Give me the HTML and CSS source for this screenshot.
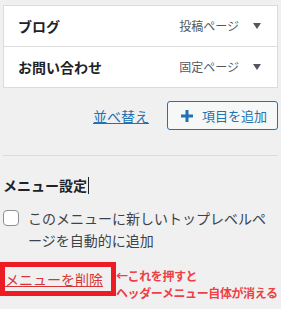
FILE: index.html
```html
<!DOCTYPE html>
<html lang="ja">
<head>
    <meta charset="UTF-8">
    <meta name="viewport" content="width=device-width, initial-scale=1.0">
    <title>メニュー設定</title>
    <link rel="stylesheet" href="styles.css">
</head>
<body>
    <div class="page">
        <!-- Menu items -->
        <ul class="menu-items">
            <li class="menu-item">
                <span class="item-title">ブログ</span>
                <span class="item-type">投稿ページ</span>
                <span class="item-arrow"></span>
            </li>
            <li class="menu-item">
                <span class="item-title">お問い合わせ</span>
                <span class="item-type">固定ページ</span>
                <span class="item-arrow"></span>
            </li>
        </ul>

        <div class="menu-actions">
            <a href="#" class="reorder-link">並べ替え</a>
            <button class="add-button">
                <svg class="plus-icon" width="12" height="12" viewBox="0 0 12 12">
                    <rect x="4.5" y="0" width="3" height="12" fill="#2271b1"></rect>
                    <rect x="0" y="4.5" width="12" height="3" fill="#2271b1"></rect>
                </svg>
                項目を追加
            </button>
        </div>

        <hr class="divider">

        <!-- Menu settings -->
        <h3 class="settings-title">メニュー設定<span class="caret"></span></h3>

        <label class="auto-add">
            <span class="checkbox"></span>
            <span class="auto-add-text">このメニューに新しいトップレベルページを自動的に追加</span>
        </label>

        <div class="delete-row">
            <div class="delete-box">
                <a href="#" class="delete-link">メニューを削除</a>
            </div>
            <div class="note">
                <span>←これを押すと</span>
                <span>ヘッダーメニュー自体が消える</span>
            </div>
        </div>
    </div>
</body>
</html>
```

FILE: styles.css
```css
/* Basic Reset */
* {
    margin: 0;
    padding: 0;
    box-sizing: border-box;
}

body {
    font-family: "Noto Sans CJK JP", "Noto Sans", sans-serif;
    background-color: #f0f0f1;
    color: #1d2327;
    font-size: 14px;
}

.page {
    padding: 5px 3px 0 3px;
}

/* Menu items */
.menu-items {
    list-style: none;
    background: #ffffff;
    border: 1px solid #dcdcde;
}

.menu-item {
    display: flex;
    align-items: center;
    height: 41px;
    padding: 0 16px 0 14px;
    border-bottom: 1px solid #dcdcde;
}

.menu-item:last-child {
    height: 40px;
    border-bottom: none;
}

.item-title {
    flex-grow: 1;
    font-size: 14px;
    font-weight: 600;
    line-height: 20px;
}

.item-type {
    font-size: 12px;
    color: #50575e;
    line-height: 20px;
}

.item-arrow {
    width: 0;
    height: 0;
    margin-left: 14px;
    border-left: 4px solid transparent;
    border-right: 4px solid transparent;
    border-top: 6px solid #50575e;
}

/* Actions */
.menu-actions {
    display: flex;
    justify-content: flex-end;
    align-items: center;
    margin-top: 13px;
}

.reorder-link {
    color: #2271b1;
    font-size: 14px;
    line-height: 20px;
    margin-right: 18px;
}

.add-button {
    display: flex;
    align-items: center;
    height: 29px;
    padding: 0 10px 0 13px;
    background: #f6f7f7;
    border: 1px solid #2271b1;
    border-radius: 3px;
    color: #2271b1;
    font-family: inherit;
    font-size: 13px;
}

.plus-icon {
    margin-right: 9px;
}

.divider {
    border: none;
    border-top: 1px solid #dcdcde;
    margin-top: 25px;
}

/* Menu settings */
.settings-title {
    display: flex;
    align-items: center;
    margin-top: 19px;
    font-size: 14px;
    font-weight: 600;
    line-height: 20px;
}

.caret {
    display: inline-block;
    width: 1px;
    height: 17px;
    background: #1d2327;
    margin-left: 1px;
}

.auto-add {
    display: flex;
    align-items: flex-start;
    margin-top: 12px;
}

.checkbox {
    flex-shrink: 0;
    width: 16px;
    height: 16px;
    margin-top: 3px;
    border: 1px solid #8c8f94;
    border-radius: 4px;
    background: #ffffff;
}

.auto-add-text {
    margin-left: 9px;
    line-height: 22px;
    color: #3c434a;
}

/* Delete */
.delete-row {
    display: flex;
    align-items: flex-start;
    margin: 11px 0 0 -3px;
}

.delete-box {
    flex-shrink: 0;
    border: 5px solid #ed1c24;
    padding: 1px 8px 1px 0;
    height: 34px;
    white-space: nowrap;
}

.delete-link {
    color: #d63638;
    font-size: 14px;
    line-height: 22px;
}

.note {
    display: flex;
    flex-direction: column;
    margin: 5px 0 0 0;
    color: #ee3f45;
    font-size: 12px;
    font-weight: 700;
    line-height: 17px;
    letter-spacing: -0.4px;
    white-space: nowrap;
}
```
